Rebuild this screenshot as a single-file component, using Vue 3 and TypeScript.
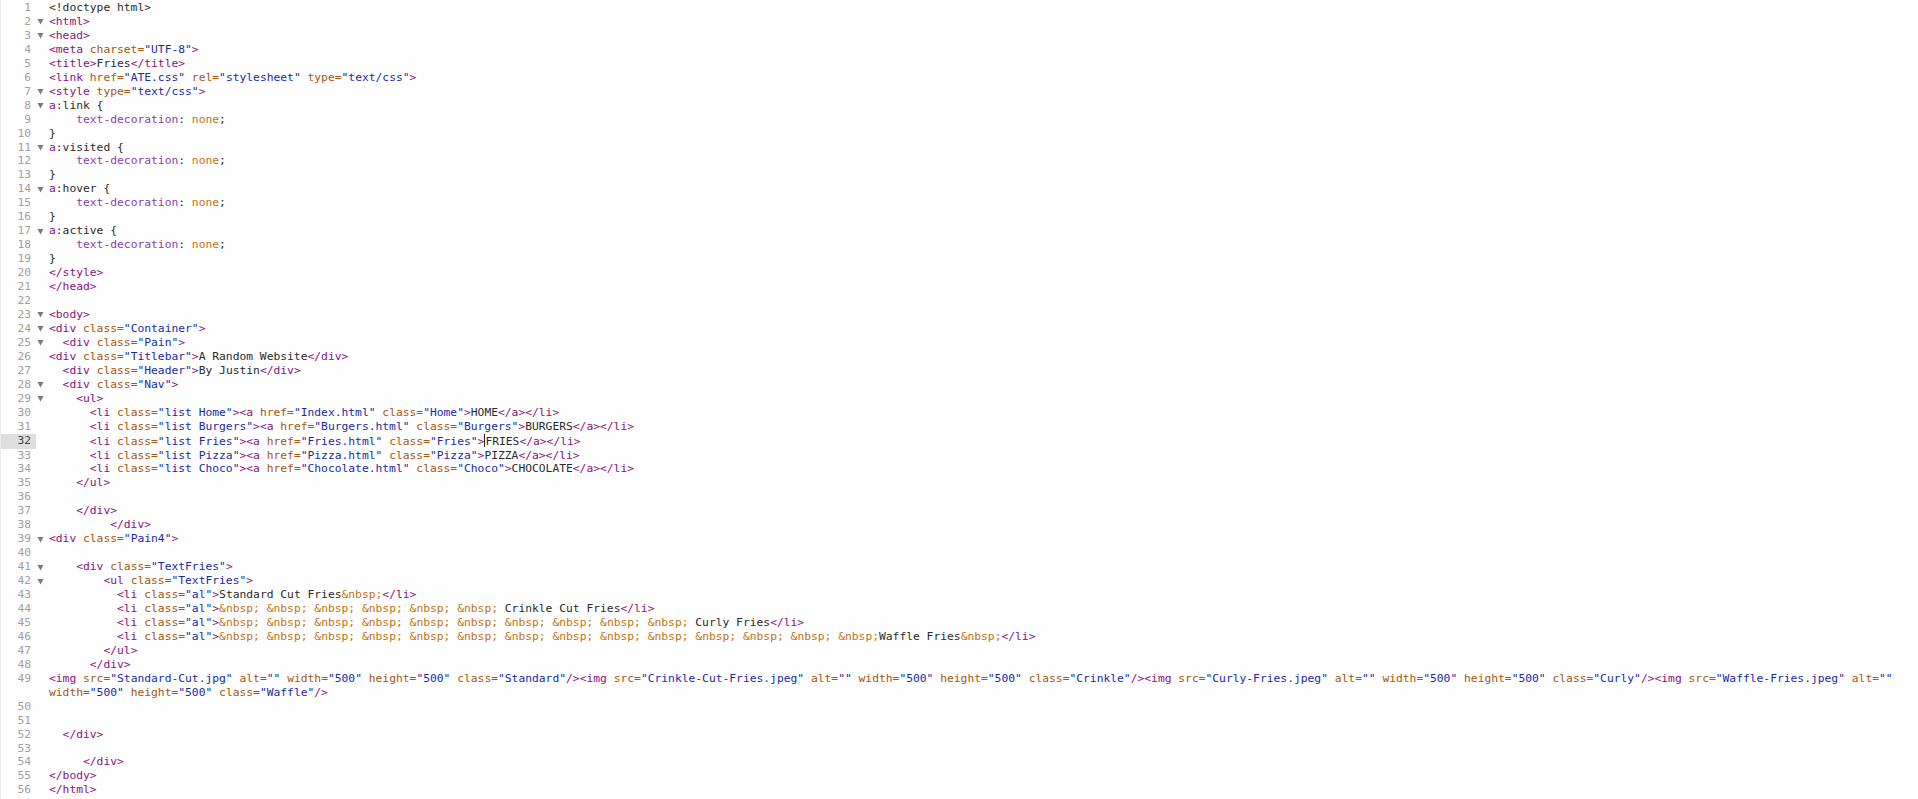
<script setup lang="ts">
type Tok = { t: string; c: string }
type Row = { n: number; fold: boolean; active: boolean; toks: Tok[] }

const source: string[] = [
  '<!doctype html>',
  '<html>',
  '<head>',
  '<meta charset="UTF-8">',
  '<title>Fries</title>',
  '<link href="ATE.css" rel="stylesheet" type="text/css">',
  '<style type="text/css">',
  'a:link {',
  '    text-decoration: none;',
  '}',
  'a:visited {',
  '    text-decoration: none;',
  '}',
  'a:hover {',
  '    text-decoration: none;',
  '}',
  'a:active {',
  '    text-decoration: none;',
  '}',
  '</style>',
  '</head>',
  '',
  '<body>',
  '<div class="Container">',
  '  <div class="Pain">',
  '<div class="Titlebar">A Random Website</div>',
  '  <div class="Header">By Justin</div>',
  '  <div class="Nav">',
  '    <ul>',
  '      <li class="list Home"><a href="Index.html" class="Home">HOME</a></li>',
  '      <li class="list Burgers"><a href="Burgers.html" class="Burgers">BURGERS</a></li>',
  '      <li class="list Fries"><a href="Fries.html" class="Fries">FRIES</a></li>',
  '      <li class="list Pizza"><a href="Pizza.html" class="Pizza">PIZZA</a></li>',
  '      <li class="list Choco"><a href="Chocolate.html" class="Choco">CHOCOLATE</a></li>',
  '    </ul>',
  '',
  '    </div>',
  '         </div>',
  '<div class="Pain4">',
  '',
  '    <div class="TextFries">',
  '        <ul class="TextFries">',
  '          <li class="al">Standard Cut Fries&nbsp;</li>',
  '          <li class="al">' + '&nbsp; '.repeat(6) + 'Crinkle Cut Fries</li>',
  '          <li class="al">' + '&nbsp; '.repeat(10) + 'Curly Fries</li>',
  '          <li class="al">' + '&nbsp; '.repeat(13) + '&nbsp;Waffle Fries&nbsp;</li>',
  '        </ul>',
  '      </div>',
  '<img src="Standard-Cut.jpg" alt="" width="500" height="500" class="Standard"/><img src="Crinkle-Cut-Fries.jpeg" alt="" width="500" height="500" class="Crinkle"/><img src="Curly-Fries.jpeg" alt="" width="500" height="500" class="Curly"/><img src="Waffle-Fries.jpeg" alt="" width="500" height="500" class="Waffle"/>',
  '',
  '',
  '  </div>',
  '',
  '     </div>',
  '</body>',
  '</html>',
]

const foldLines = new Set([2, 3, 7, 8, 11, 14, 17, 23, 24, 25, 28, 29, 39, 41, 42])

function tokenizeTag(tag: string): Tok[] {
  const out: Tok[] = []
  const re = /([\w-]+=)("[^"]*")/g
  let last = 0
  let m: RegExpExecArray | null
  while ((m = re.exec(tag))) {
    if (m.index > last) out.push({ t: tag.slice(last, m.index), c: 'tag' })
    out.push({ t: m[1], c: 'attr' })
    out.push({ t: m[2], c: 'val' })
    last = m.index + m[0].length
  }
  if (last < tag.length) out.push({ t: tag.slice(last), c: 'tag' })
  return out
}

function tokenize(line: string, n: number): Tok[] {
  if (n === 1) return [{ t: line, c: 'plain' }]
  const css = line.match(/^(a)(:\w+ \{)$/)
  if (css) return [{ t: css[1], c: 'tag' }, { t: css[2], c: 'plain' }]
  if (line.includes('text-decoration')) {
    return [
      { t: '    text-decoration', c: 'prop' },
      { t: ': ', c: 'plain' },
      { t: 'none', c: 'ent' },
      { t: ';', c: 'plain' },
    ]
  }
  const out: Tok[] = []
  const re = /<[^>]*>|&nbsp;/g
  let last = 0
  let m: RegExpExecArray | null
  while ((m = re.exec(line))) {
    if (m.index > last) out.push({ t: line.slice(last, m.index), c: /^ +$/.test(line.slice(last, m.index)) ? 'ent' : 'plain' })
    if (m[0] === '&nbsp;') out.push({ t: m[0], c: 'ent' })
    else out.push(...tokenizeTag(m[0]))
    last = m.index + m[0].length
  }
  if (last < line.length) out.push({ t: line.slice(last), c: 'plain' })
  return out
}

const rows: Row[] = source.map((line, i) => ({
  n: i + 1,
  fold: foldLines.has(i + 1),
  active: i + 1 === 32,
  toks: tokenize(line, i + 1),
}))
</script>

<template>
  <div class="editor">
    <div v-for="row in rows" :key="row.n" class="row">
      <div class="num" :class="{ active: row.active }">{{ row.n }}</div>
      <div class="fold">
        <svg v-if="row.fold" width="7" height="7" viewBox="0 0 7 7"><path d="M0.5 1H6.5L3.5 6.5Z" fill="#7a7a7a" /></svg>
      </div>
      <div class="code"><template v-for="(tok, i) in row.toks" :key="i"><span v-if="row.active && tok.t === 'FRIES'" class="caret"></span><span :class="tok.c">{{ tok.t }}</span></template></div>
    </div>
  </div>
</template>

<style>
html, body { margin: 0; background: #fefefe; }
</style>

<style scoped>
.editor {
  width: 1918px;
  height: 799px;
  overflow: hidden;
  box-sizing: border-box;
  padding-top: 1px;
  background: #fefefe;
  border-left: 1px solid #ececec;
  font-family: "DejaVu Sans Mono", monospace;
  font-size: 11.3px;
  line-height: 13.96px;
  color: #2b2b2b;
}
.row {
  display: grid;
  grid-template-columns: 35px 13px 1fr;
}
.num {
  box-sizing: border-box;
  padding-right: 5px;
  text-align: right;
  color: #a0a0a0;
}
.num.active {
  background: #dedede;
  color: #444;
}
.fold {
  display: flex;
  align-items: center;
  padding-left: 1px;
}
.code {
  width: 1860px;
  white-space: pre-wrap;
}
.caret {
  display: inline-block;
  width: 0;
  height: 13px;
  margin-bottom: -2px;
  border-left: 1px solid #222;
}
.plain { color: #2b2b2b; }
.tag { color: #881280; }
.attr { color: #a4570f; }
.val { color: #1a2aa6; }
.ent { color: #c07410; }
.prop { color: #8a3fa8; }
</style>
